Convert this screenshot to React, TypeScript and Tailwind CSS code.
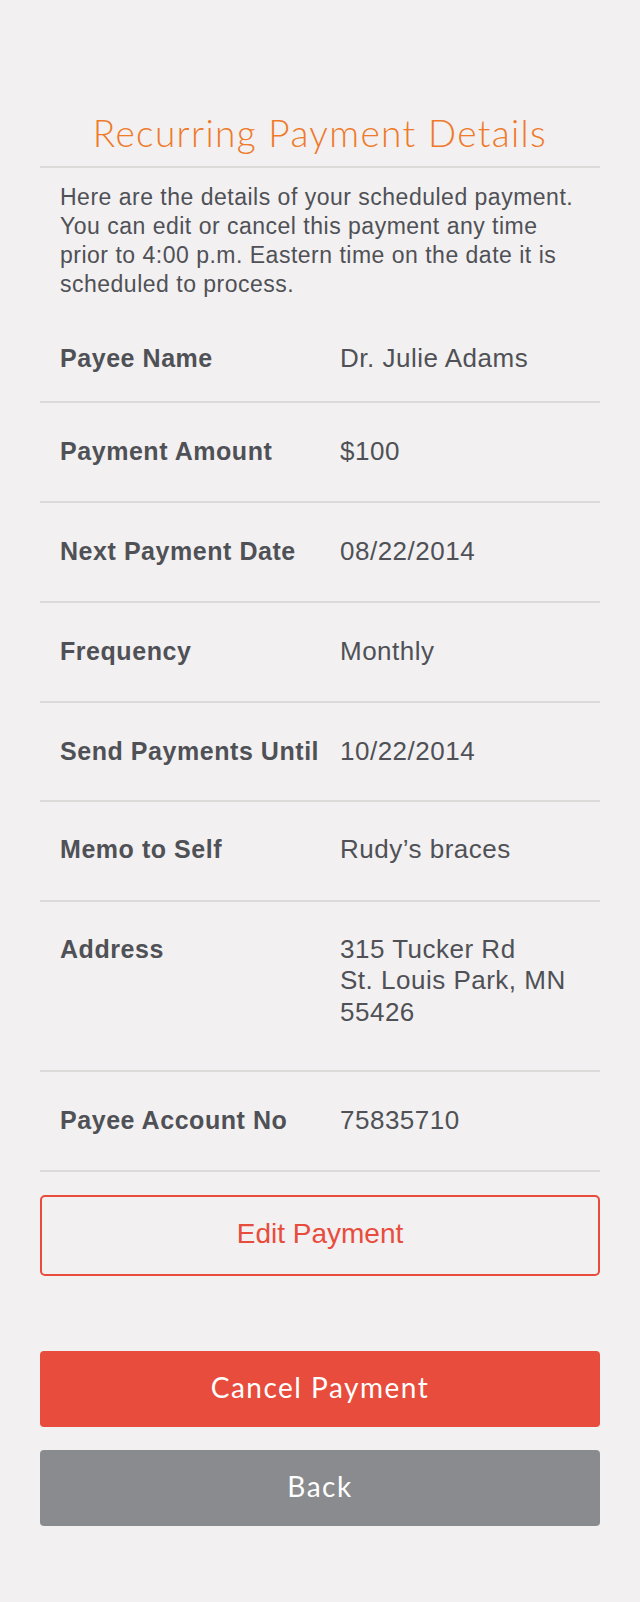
import React from "react";

const rows: { label: string; value: string[]; cls: string }[] = [
  { label: "Payee Name", value: ["Dr. Julie Adams"], cls: "pt-[44px] pb-[26px]" },
  { label: "Payment Amount", value: ["$100"], cls: "pt-[33px] pb-[33.5px]" },
  { label: "Next Payment Date", value: ["08/22/2014"], cls: "pt-[33px] pb-[33.5px]" },
  { label: "Frequency", value: ["Monthly"], cls: "pt-[33px] pb-[33.5px]" },
  { label: "Send Payments Until", value: ["10/22/2014"], cls: "pt-[33px] pb-[33px]" },
  { label: "Memo to Self", value: ["Rudy\u2019s braces"], cls: "pt-[32px] pb-[34px]" },
  {
    label: "Address",
    value: ["315 Tucker Rd", "St. Louis Park, MN", "55426"],
    cls: "pt-[32px] pb-[42px]",
  },
  { label: "Payee Account No", value: ["75835710"], cls: "pt-[33px] pb-[33.5px]" },
];

export default function App() {
  return (
    <div className="min-h-[1602px] w-full bg-[#f2f0f1] font-['Liberation_Sans',Arial,sans-serif] text-[#4f5156]">
      <div className="px-[40px] pt-[111px]">
        <h1 className="border-b-2 border-[#dddbd9] pb-[11px] text-center font-['Lato',sans-serif] text-[37px] font-light leading-[44px] tracking-[1.35px] text-[#ee7a2a]">
          Recurring Payment Details
        </h1>
        <p className="px-[20px] pt-[15px] text-[23px] leading-[29px] tracking-[0.5px]">
          Here are the details of your scheduled payment.
          <br />
          You can edit or cancel this payment any time
          <br />
          prior to 4:00 p.m. Eastern time on the date it is
          <br />
          scheduled to process.
        </p>
        <div className="flex flex-col">
          {rows.map((r) => (
            <div
              key={r.label}
              className={`flex items-start border-b-2 border-[#dddbd9] px-[20px] leading-[31.5px] ${r.cls}`}
            >
              <div className="w-[280px] shrink-0 text-[25px] font-bold tracking-[0.55px]">{r.label}</div>
              <div className="flex flex-col text-[26px] tracking-[0.5px]">
                {r.value.map((v) => (
                  <span key={v}>{v}</span>
                ))}
              </div>
            </div>
          ))}
        </div>
        <button className="mt-[23px] flex h-[81px] w-full items-center justify-center rounded-[5px] border-2 border-[#e84c3d] pb-[3px] text-[28px] text-[#e84c3d]">
          Edit Payment
        </button>
        <button className="mt-[75px] flex h-[76px] w-full items-center justify-center rounded-[4px] bg-[#e74c3c] pb-[5px] font-['Lato',sans-serif] text-[28px] tracking-[1.5px] text-white">
          Cancel Payment
        </button>
        <button className="mt-[23px] flex h-[76px] w-full items-center justify-center rounded-[4px] bg-[#898b8e] pb-[5px] font-['Lato',sans-serif] text-[28px] tracking-[1.5px] text-white">
          Back
        </button>
      </div>
    </div>
  );
}
